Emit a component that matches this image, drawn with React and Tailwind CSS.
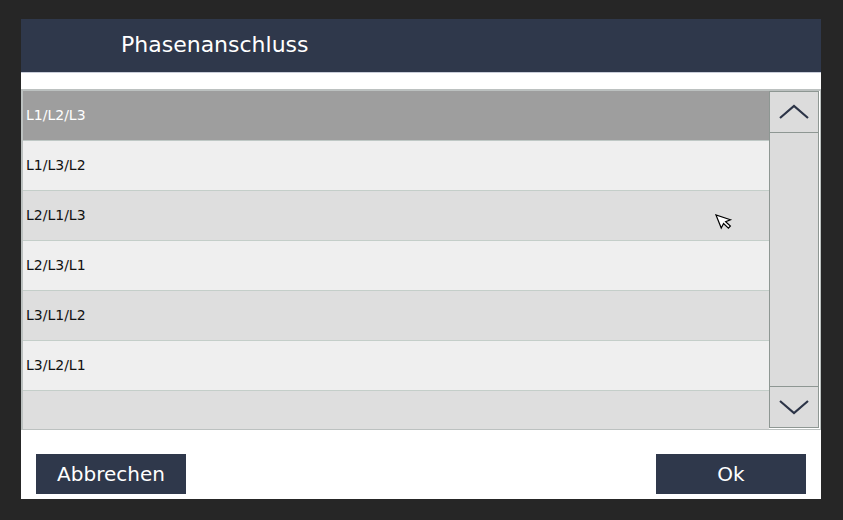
import React from 'react';

const rows = ['L1/L2/L3', 'L1/L3/L2', 'L2/L1/L3', 'L2/L3/L1', 'L3/L1/L2', 'L3/L2/L1'];

const App = () => {
    return (
        <div className="relative w-[843px] h-[520px] bg-[#262626] pt-[19px] pl-[21px] font-['DejaVu_Sans',sans-serif]">
            <div className="w-[800px] h-[480px] bg-white flex flex-col">
                {/* Header */}
                <div className="h-[54px] bg-[#2f384b] border-b border-[#c9cdd9] flex items-center pl-[100px] pb-[2px]">
                    <span className="text-white text-[22px] leading-none">Phasenanschluss</span>
                </div>

                <div className="h-[16px]" />

                {/* List */}
                <div className="h-[341px] border border-t-2 border-l-2 border-[#bcc1c0] flex">
                    <div className="flex-1 flex flex-col bg-[#dedede]">
                        {rows.map((r, i) => (
                            <div
                                key={r}
                                className={
                                    i === 0
                                        ? 'h-[50px] shrink-0 flex items-center pl-[3px] text-[14px] text-white bg-[#9e9e9e] border-b border-[#bfc8c5]'
                                        : i % 2 === 1
                                        ? 'h-[50px] shrink-0 flex items-center pl-[3px] text-[14px] text-[#111] bg-[#efefef] border-b border-[#c4cec9]'
                                        : 'h-[50px] shrink-0 flex items-center pl-[3px] text-[14px] text-[#111] bg-[#dedede] border-b border-[#c4cec9]'
                                }
                            >
                                {r}
                            </div>
                        ))}
                    </div>

                    {/* Scrollbar */}
                    <div className="w-[50px] mb-[1px] mr-[1px] flex flex-col bg-[#dcdcdc] border border-[#8e9793]">
                        <div className="h-[41px] border-b border-[#8e9793] flex items-center justify-center">
                            <svg width="32" height="16" viewBox="0 0 32 16" fill="none">
                                <path d="M2 14 L16 2 L30 14" stroke="#2c3447" strokeWidth="2.2" />
                            </svg>
                        </div>
                        <div className="flex-1" />
                        <div className="h-[41px] border-t border-[#8e9793] flex items-center justify-center">
                            <svg width="32" height="16" viewBox="0 0 32 16" fill="none">
                                <path d="M2 2 L16 14 L30 2" stroke="#2c3447" strokeWidth="2.2" />
                            </svg>
                        </div>
                    </div>
                </div>

                {/* Footer */}
                <div className="flex justify-between px-[15px] pt-[24px]">
                    <button className="w-[150px] h-[40px] bg-[#2f384b] text-white text-[20px] flex items-center justify-center">
                        Abbrechen
                    </button>
                    <button className="w-[150px] h-[40px] bg-[#2f384b] text-white text-[20px] flex items-center justify-center">
                        Ok
                    </button>
                </div>
            </div>

            {/* Mouse pointer */}
            <svg className="absolute left-[715px] top-[214px]" width="20" height="22" viewBox="0 0 20 22">
                <path d="M1 1 L1 15 L4.8 11.8 L7.6 17.8 L10.2 16.6 L7.4 10.8 L12.6 10.8 Z" fill="white" stroke="black" strokeWidth="1.2" strokeLinejoin="miter" transform="rotate(-22 1 1)" />
            </svg>
        </div>
    );
};

export default App;
